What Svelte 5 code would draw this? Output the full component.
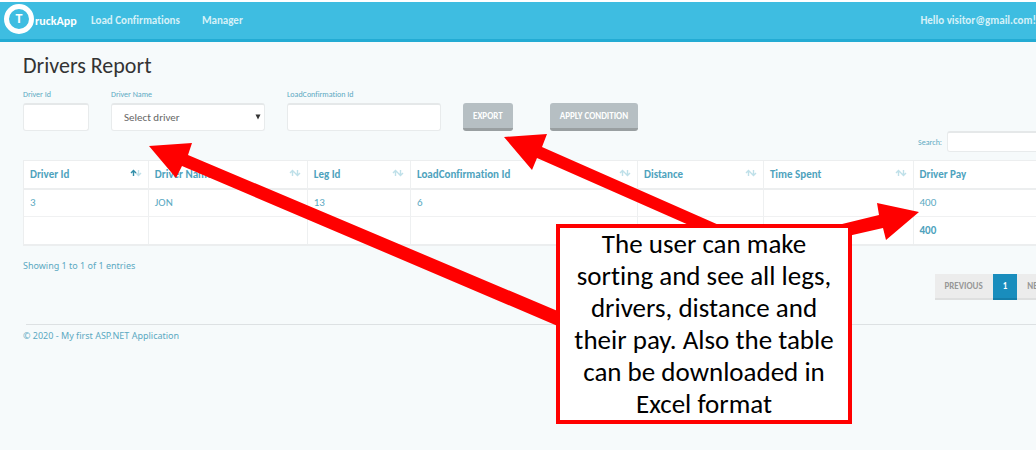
<script>
  const columns = [
    { name: 'Driver Id', share: 12.1, sorted: true },
    { name: 'Driver Name', share: 15.4 },
    { name: 'Leg Id', share: 10 },
    { name: 'LoadConfirmation Id', share: 22 },
    { name: 'Distance', share: 12.2 },
    { name: 'Time Spent', share: 14.5 },
    { name: 'Driver Pay', share: 13.8 }
  ];
  const rows = [['3', 'JON', '13', '6', '', '', '400']];
  const totals = ['', '', '', '', '', '', '400'];
</script>

<div class="page">
  <header>
    <a class="brand" href="#home">
      <span class="ring">T</span><span class="name">ruckApp</span>
    </a>
    <nav>
      <a href="#confirmations">Load Confirmations</a>
      <a href="#manager">Manager</a>
    </nav>
    <a class="hello" href="#account">Hello visitor@gmail.com!</a>
  </header>

  <main>
    <h1>Drivers Report</h1>

    <form class="filters">
      <div class="field short">
        <label for="driver-id">Driver Id</label>
        <input id="driver-id" type="text" />
      </div>
      <div class="field">
        <label for="driver-name">Driver Name</label>
        <div class="select">
          <select id="driver-name"><option>Select driver</option></select>
          <svg viewBox="0 0 6 6" width="6" height="6" aria-hidden="true"><path d="M0.500 0.500h5L3 5.500z" fill="#333" /></svg>
        </div>
      </div>
      <div class="field">
        <label for="confirmation-id">LoadConfirmation Id</label>
        <input id="confirmation-id" type="text" />
      </div>
      <div class="actions">
        <button type="button">EXPORT</button>
        <button type="button">APPLY CONDITION</button>
      </div>
    </form>

    <div class="report">
      <div class="search">
        <label for="search">Search:</label>
        <input id="search" type="text" />
      </div>

      <table>
        <colgroup>
          {#each columns as column}
            <col style="width: {column.share}%" />
          {/each}
        </colgroup>
        <thead>
          <tr>
            {#each columns as column}
              <th scope="col">
                <div class="head">
                  {column.name}
                  <svg class="sort" class:sorted={column.sorted} viewBox="0 0 12 8" width="12" height="8" aria-hidden="true">
                    <path class="down" d="M8.500 1V6.500M6 4L8.500 6.500L11 4" />
                    <path class="up" d="M3.500 7V1.500M1 4L3.500 1.500L6 4" />
                  </svg>
                </div>
              </th>
            {/each}
          </tr>
        </thead>
        <tbody>
          {#each rows as row}
            <tr>{#each row as cell}<td>{cell}</td>{/each}</tr>
          {/each}
        </tbody>
        <tfoot>
          <tr>{#each totals as cell}<td>{cell}</td>{/each}</tr>
        </tfoot>
      </table>

      <p class="info">Showing 1 to 1 of 1 entries</p>
      <div class="pager">
        <button type="button">PREVIOUS</button>
        <button type="button" class="current">1</button>
        <button type="button">NEXT</button>
      </div>
    </div>

    <footer>© 2020 - My first ASP.NET Application</footer>
  </main>

  <svg class="arrows" width="1036" height="458" viewBox="0 0 1036 458" aria-hidden="true">
    <path d="M149 146L192 143L188 155L560 312V327L182 166L176 178Z" />
    <path d="M504 137L547 134L542 147L720 225.500H690L537 158L532 170Z" />
    <path d="M919 212L877 203L879 215L838 225L848 236L883 228L886 240Z" />
  </svg>
  <aside>
    The user can make<br />sorting and see all legs,<br />drivers, distance and<br />their pay. Also the table<br />can be downloaded in<br />Excel format
  </aside>
</div>

<style>
  :global(body) {
    margin: 0;
    background: #fff;
  }
  .page {
    position: relative;
    box-sizing: border-box;
    min-height: 448px;
    margin: 2px 0 8px;
    overflow: hidden;
    background: #f6fafb;
    color: #5ba9c2;
    font: 11px/16px Carlito, 'Noto Sans', sans-serif;
    font-variant-ligatures: none;
  }
  header {
    display: flex;
    align-items: center;
    height: 37px;
    border-bottom: 3px solid #23abd3;
    background: #3ebde1;
    font-weight: 700;
  }
  header a {
    color: #d5f1f8;
    text-decoration: none;
  }
  .brand {
    display: flex;
    align-items: center;
    gap: 1px;
    width: 87px;
    padding-left: 4px;
    font-size: 12px;
  }
  header .brand {
    color: #fff;
  }
  .ring {
    display: flex;
    align-items: center;
    justify-content: center;
    box-sizing: border-box;
    width: 30px;
    height: 30px;
    margin-bottom: 4px;
    border: 5px solid #fff;
    border-radius: 50%;
    font-size: 14px;
  }
  nav {
    display: flex;
    gap: 22px;
    flex: 1;
  }
  main {
    padding: 14px 0 0 23px;
  }
  h1 {
    margin: 0;
    color: #333;
    font-size: 22px;
    font-weight: 400;
    line-height: 20px;
  }
  .filters {
    display: flex;
    align-items: flex-end;
    gap: 22px;
    margin-top: 9px;
  }
  .field {
    display: flex;
    flex-direction: column;
    width: 154px;
  }
  .field.short {
    width: 66px;
  }
  label {
    font-size: 8px;
    line-height: 18px;
  }
  input,
  select {
    box-sizing: border-box;
    width: 100%;
    height: 28px;
    padding: 0 12px;
    border: 1px solid #e8ebec;
    border-top: 2px solid #e5e8e9;
    border-radius: 3px;
    background: #fff;
    color: #666;
    font: inherit;
  }
  select {
    appearance: none;
  }
  .select {
    display: grid;
    align-items: center;
  }
  .select > * {
    grid-area: 1 / 1;
  }
  .select svg {
    justify-self: end;
    margin-right: 4px;
    pointer-events: none;
  }
  .actions {
    display: flex;
    gap: 37px;
  }
  button {
    border: 0;
    font: inherit;
    font-size: 9px;
    font-weight: 700;
  }
  .actions button {
    height: 28px;
    padding: 0 10px;
    border-bottom: 3px solid #999fa1;
    border-radius: 3px;
    background: #b6bfc3;
    color: #fff;
  }
  .report {
    margin-right: -21px;
  }
  .search {
    display: flex;
    justify-content: flex-end;
    align-items: center;
    gap: 5px;
    margin-bottom: 8px;
  }
  .search input {
    width: 110px;
    height: 21px;
  }
  table {
    width: 100%;
    table-layout: fixed;
    border-collapse: separate;
    border-spacing: 0;
    border: 1px solid #eceeef;
    border-bottom-width: 2px;
    background: #fff;
  }
  th,
  td {
    box-sizing: border-box;
    height: 27px;
    padding: 0 6px;
    border-right: 1px solid #eef0f1;
    text-align: left;
    white-space: nowrap;
  }
  th {
    height: 29px;
    border-bottom: 2px solid #eceeef;
    color: #4ea2bd;
  }
  tbody td {
    border-bottom: 1px solid #f0f1f2;
  }
  tfoot td {
    color: #4ea2bd;
    font-weight: 700;
  }
  .head {
    display: flex;
    justify-content: space-between;
    align-items: center;
  }
  .sort {
    margin-bottom: 4px;
    fill: none;
    stroke: #bfe0e9;
    stroke-width: 1.4;
  }
  .sorted .up {
    stroke: #318da8;
  }
  .info,
  footer {
    font-family: 'Noto Sans', sans-serif;
    font-size: 9px;
  }
  .info {
    margin: 12px 0 0;
  }
  .pager {
    display: flex;
    justify-content: flex-end;
  }
  .pager button {
    height: 26px;
    padding: 0 10px;
    border-bottom: 2px solid #dedfdf;
    background: #ececec;
    color: #979797;
  }
  .pager .current {
    border-color: #147da9;
    background: #198dbd;
    color: #fff;
  }
  footer {
    margin: 24px 0 0 3px;
    padding-top: 3px;
    border-top: 1px solid #dde1e3;
    text-indent: -3px;
  }
  .arrows {
    position: absolute;
    top: -2px;
    left: 0;
    fill: #f00;
    pointer-events: none;
  }
  aside {
    position: absolute;
    top: 222px;
    left: 556px;
    box-sizing: border-box;
    width: 296px;
    border: 4px solid #f00;
    background: #fff;
    color: #000;
    font-size: 27px;
    line-height: 32px;
    text-align: center;
    white-space: nowrap;
  }
</style>
